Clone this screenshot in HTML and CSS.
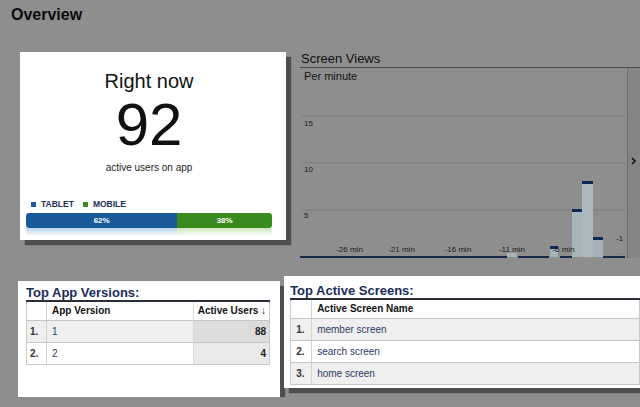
FILE: index.html
```html
<!DOCTYPE html>
<html>
<head>
  <meta charset="utf-8">
  <meta name="viewport" content="width=device-width, initial-scale=1">
  <link rel="stylesheet" href="styles.css">
</head>
<body>
  <!-- page header -->
  <h1 class="page-title">Overview</h1>

  <div class="top-row">
    <!-- right now card -->
    <div class="card now-card">
      <div class="now-label">Right now</div>
      <div class="now-count">92</div>
      <div class="now-sub">active users on app</div>
      <div class="legend">
        <span class="swatch swatch-blue"></span><span class="legend-text">TABLET</span>
        <span class="swatch swatch-green"></span><span class="legend-text">MOBILE</span>
      </div>
      <div class="split-bar">
        <div class="seg seg-blue" style="width:61.5%">62%</div>
        <div class="seg seg-green">38%</div>
      </div>
      <div class="split-shine">
        <div class="shine-blue" style="width:61.5%"></div>
        <div class="shine-green"></div>
      </div>
    </div>

    <!-- screen views chart -->
    <div class="views">
      <div class="views-title">Screen Views</div>
      <div class="views-box">
        <svg class="views-chart" width="327" height="190" viewBox="0 0 327 190">
          <text x="4" y="12" class="chart-head">Per minute</text>
          <line x1="2" y1="48" x2="325" y2="48" class="grid"/>
          <line x1="2" y1="95" x2="325" y2="95" class="grid"/>
          <line x1="2" y1="142" x2="325" y2="142" class="grid"/>
          <text x="4" y="58" class="tick">15</text>
          <text x="4" y="104" class="tick">10</text>
          <text x="4" y="150" class="tick">5</text>

          <rect x="207" y="185" width="10" height="4" class="bar"/>
          <rect x="250" y="179" width="8" height="10" class="bar"/>
          <rect x="272" y="142" width="10" height="47" class="bar"/>
          <rect x="282" y="114" width="11" height="75" class="bar bar-alt"/>
          <rect x="293" y="170" width="10" height="19" class="bar"/>
          <rect x="250" y="178" width="8" height="3" class="cap"/>
          <rect x="272" y="141" width="10" height="3" class="cap"/>
          <rect x="282" y="113" width="11" height="3" class="cap"/>
          <rect x="293" y="169" width="10" height="3" class="cap"/>

          <text x="49.5" y="184" class="axis">-26 min</text>
          <text x="101.5" y="184" class="axis">-21 min</text>
          <text x="158" y="184" class="axis">-16 min</text>
          <text x="212" y="184" class="axis">-11 min</text>
          <text x="263.5" y="184" class="axis">-6 min</text>
          <text x="316" y="173" class="tick">-1</text>
          <text x="316" y="186" class="tick dim">...</text>

          <line x1="0" y1="189" x2="207" y2="189" class="base"/>
          <line x1="218" y1="189" x2="249" y2="189" class="base"/>
          <line x1="260" y1="189" x2="272" y2="189" class="base"/>
          <line x1="303" y1="189" x2="325" y2="189" class="base"/>
        </svg>
        <div class="views-side">
          <svg width="12" height="190" viewBox="0 0 12 190">
            <path d="M4 90 L7 93 L4 96" fill="none" stroke="#111" stroke-width="1.6"/>
          </svg>
        </div>
      </div>
    </div>
  </div>

  <div class="bottom-row">
    <!-- top app versions -->
    <div class="card table-card versions-card">
      <div class="table-title">Top App Versions:</div>
      <table class="data-table">
        <tr class="head">
          <th class="num"></th>
          <th class="name">App Version</th>
          <th class="metric">Active Users &#8595;</th>
        </tr>
        <tr class="odd">
          <td class="num">1.</td>
          <td class="name">1</td>
          <td class="metric">88</td>
        </tr>
        <tr class="even">
          <td class="num">2.</td>
          <td class="name">2</td>
          <td class="metric">4</td>
        </tr>
      </table>
    </div>

    <!-- top active screens -->
    <div class="card table-card screens-card">
      <div class="table-title">Top Active Screens:</div>
      <table class="data-table">
        <tr class="head">
          <th class="num"></th>
          <th class="name">Active Screen Name</th>
        </tr>
        <tr class="odd">
          <td class="num">1.</td>
          <td class="name">member screen</td>
        </tr>
        <tr class="even">
          <td class="num">2.</td>
          <td class="name">search screen</td>
        </tr>
        <tr class="odd">
          <td class="num">3.</td>
          <td class="name">home screen</td>
        </tr>
      </table>
    </div>
  </div>
</body>
</html>
```

FILE: styles.css
```css
/* overview dashboard */
* {box-sizing: border-box}

body {
  margin: 0;
  background: #8e8e8e;
  font-family: "Liberation Sans", Arial, Helvetica, sans-serif;
  color: #111;
  overflow: hidden;
}

.page-title {
  margin: 0;
  height: 52px;
  padding: 5px 11px 0;
  font-size: 16px;
  line-height: 19px;
  font-weight: bold;
  color: #0c0c0c;
}

.top-row {
  display: flex;
  align-items: flex-start;
}

/* white cards with hard shadow */
.card {
  background: #fff;
  box-shadow: 5px 5px 1px #4e4e4e;
}

.now-card {
  margin-left: 20px;
  width: 266px;
  height: 188px;
  padding: 17px 14px 0 6px;
  text-align: center;
}

.now-label {
  font-size: 20px;
  line-height: 24px;
  color: #111;
}

.now-count {
  margin-top: 2px;
  font-size: 60px;
  line-height: 60px;
  color: #111;
}

.now-sub {
  margin-top: 7px;
  font-size: 10px;
  line-height: 12px;
  color: #222;
}

.legend {
  margin-top: 25px;
  padding-left: 5px;
  display: flex;
  align-items: center;
  height: 10px;
  font-size: 8.5px;
  font-weight: bold;
  color: #1d2e58;
}

.swatch {
  width: 5px;
  height: 5px;
  margin-right: 5px;
}

.swatch-blue {background: #1b5a9a}
.swatch-green {background: #3b8a1e}

.legend-text {margin-right: 9px}

.split-bar {
  margin-top: 4px;
  display: flex;
  height: 15px;
  border-radius: 3px;
  overflow: hidden;
  font-size: 8px;
  font-weight: bold;
  line-height: 15px;
  color: #fff;
}

.seg-blue {background: #1b5a9a}
.seg-green {flex: 1; background: #3b8a1e}

.split-shine {
  display: flex;
  height: 8px;
}

.shine-blue {background: linear-gradient(#b4d3ec, #fff)}
.shine-green {flex: 1; background: linear-gradient(#cfe6bd, #fff)}

/* screen views */
.views {
  margin-left: 14px;
  flex: 1;
}

.views-title {
  height: 16px;
  padding-left: 1px;
  font-size: 13px;
  line-height: 14px;
  color: #111;
  border-bottom: 1px solid #4f4f4f;
}

.views-box {
  display: flex;
  height: 190px;
}

.views-chart {display: block}

.chart-head {font-size: 11px; fill: #151515}
.grid {stroke: #7b7b7b; stroke-width: 1}
.tick {font-size: 8px; fill: #1a1a1a}
.tick.dim {fill: #6a6a6a}
.axis {font-size: 8px; fill: #1a1a1a; text-anchor: middle}
.bar {fill: #a6b3b9}
.bar-alt {fill: #adb9be}
.cap {fill: #0f2a52}
.base {stroke: #14284a; stroke-width: 2}

.views-side {
  width: 13px;
  background: #858585;
  border-left: 1px solid #6c6c6c;
}

/* bottom tables */
.bottom-row {
  margin-top: 18px;
  display: flex;
  align-items: flex-start;
}

.versions-card {
  margin-left: 18px;
  margin-top: 5px;
  width: 265px;
  height: 116px;
  padding: 5px 10px 0 8px;
}

.screens-card {
  position: relative;
  margin-left: 4px;
  width: 360px;
  height: 112px;
  padding: 8px 0 0 6px;
}

.table-title {
  font-size: 13px;
  line-height: 14px;
  font-weight: bold;
  color: #1b2b5a;
}

.data-table {
  width: 100%;
  border-collapse: collapse;
  border-top: 2px solid #2a2e38;
  border-left: 1px solid #c9c9c9;
  border-right: 1px solid #c9c9c9;
  font-size: 10px;
}

.data-table th, .data-table td {
  height: 22px;
  padding: 0 5px;
  border-bottom: 1px solid #c6c6c6;
  text-align: left;
  white-space: nowrap;
}

.data-table th {
  height: 19px;
  font-weight: bold;
  color: #111;
  background: #fff;
}

.data-table .num {
  width: 20px;
  padding: 0 0 0 3px;
  border-right: 1px solid #d3d3d3;
  font-weight: bold;
  color: #333;
}

.screens-card .data-table .num {width: 21px; padding-left: 5px}

.data-table td.name {color: #2b3a63}

.data-table .metric {
  width: 76px;
  padding: 0 3px 0 2px;
  text-align: right;
  border-left: 1px solid #dcdcdc;
}

.data-table td.metric {font-weight: bold; color: #222}

.odd td {background: #efefef}
.even td {background: #fff}
.odd td.metric {background: #dcdcdc}
.even td.metric {background: #e9e9e9}
```
